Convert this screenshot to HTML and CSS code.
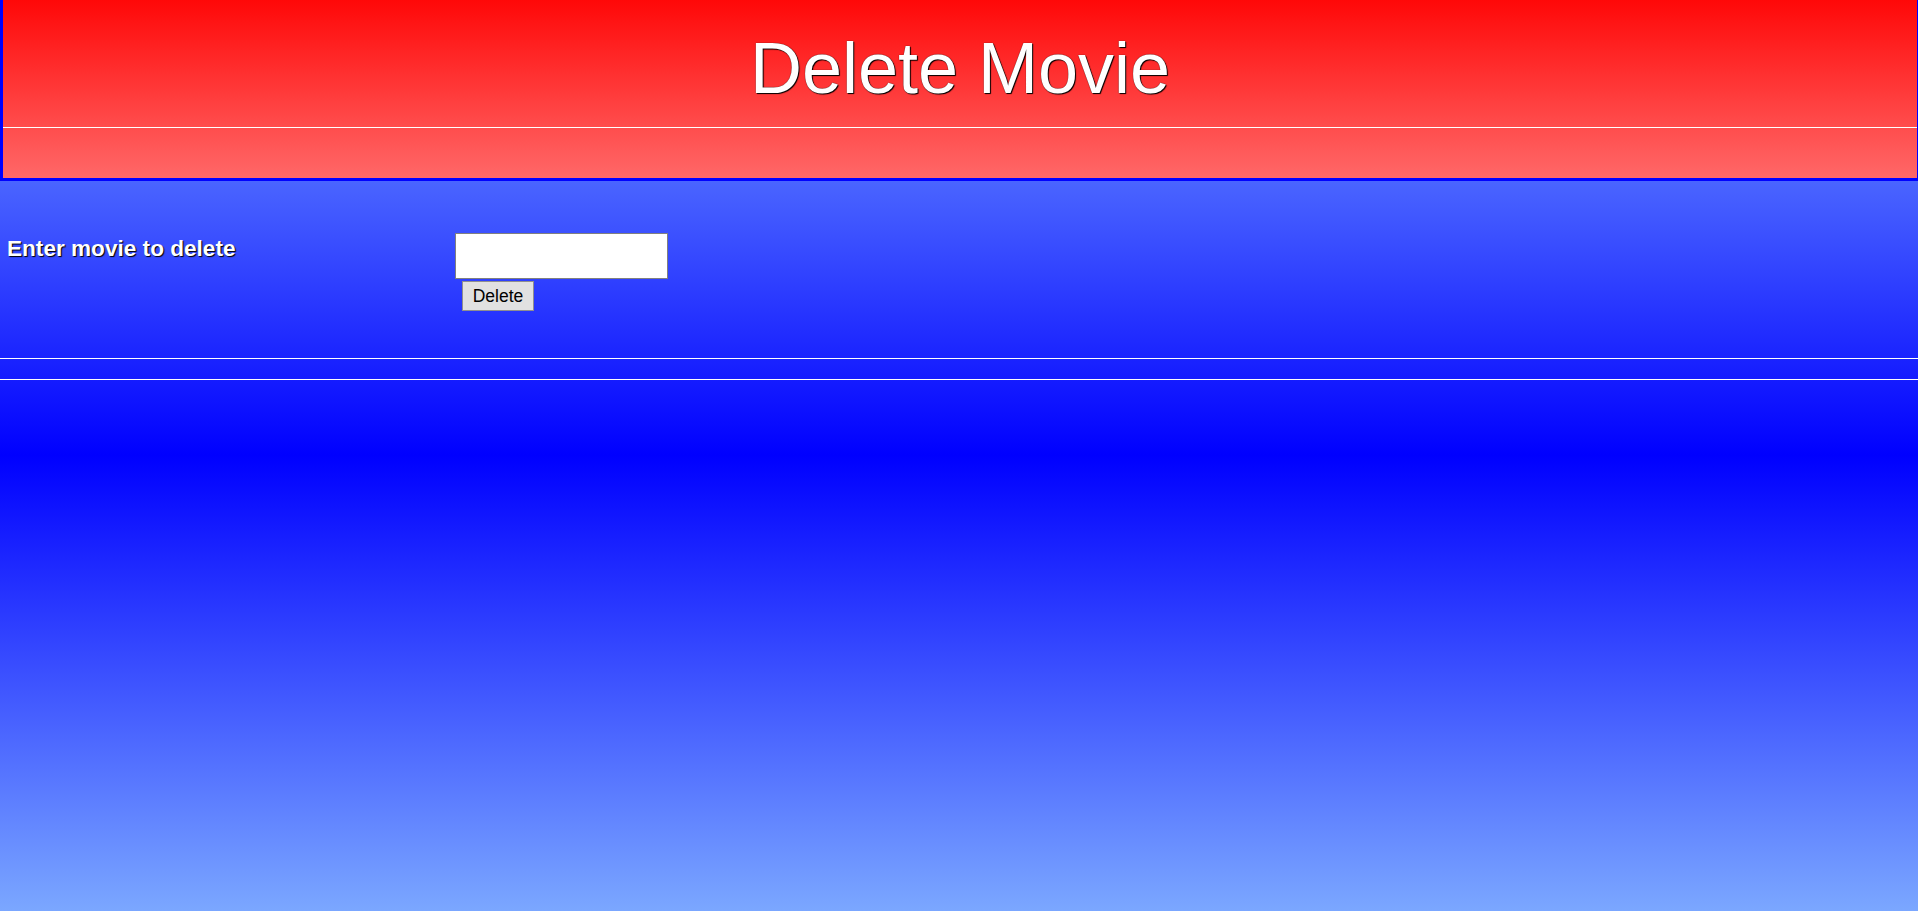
FILE: index.html
```html
<!DOCTYPE html>
<html>
<head>
<meta charset="utf-8">
<title>Delete Movie</title>
<link rel="stylesheet" href="styles.css">
</head>
<body>
<header class="banner">
  <h1 class="banner-title">Delete Movie</h1>
  <hr class="banner-rule">
</header>
<main class="content">
  <form class="delete-form">
    <label class="field-label" for="movie">Enter movie to delete</label>
    <div class="field-controls">
      <input class="movie-input" id="movie" type="text">
      <button class="delete-button" type="button">Delete</button>
    </div>
  </form>
  <hr class="page-rule first">
  <hr class="page-rule second">
</main>
</body>
</html>
```
FILE: styles.css
```css
html, body {
  margin: 0;
  padding: 0;
}
body {
  min-height: 911px;
  font-family: "Liberation Sans", Arial, sans-serif;
  background: linear-gradient(#7ba7ff 0px, #0000ff 455px, #7ba7ff 911px);
  background-repeat: no-repeat;
  background-size: 100% 911px;
  overflow: hidden;
}
.banner {
  box-sizing: border-box;
  width: 1918px;
  height: 181px;
  border-style: solid;
  border-color: #0000ff;
  border-width: 0 1px 3px 3px;
  background: linear-gradient(#ff0808, #ff6868);
  padding-top: 27px;
}
.banner-title {
  margin: 0;
  font-family: "Liberation Sans", Arial, sans-serif;
  font-weight: normal;
  font-size: 72px;
  line-height: 83px;
  text-align: center;
  color: #ffffff;
  text-shadow: 0 0 1px #000, 1px 1px 1px #000;
}
.banner-rule {
  margin: 17px 0 0 0;
  border: 0;
  height: 1px;
  background: #ffffff;
}
.content {
  padding: 0;
}
.delete-form {
  display: grid;
  grid-template-columns: 455px auto;
  padding-top: 52px;
  height: 125px;
  box-sizing: border-box;
}
.field-label {
  padding-left: 7px;
  padding-top: 3px;
  font-weight: bold;
  font-size: 22.6px;
  line-height: 25px;
  color: #ffffff;
  text-shadow: 1px 1px 1px #000;
}
.field-controls {
  display: flex;
  flex-direction: column;
  align-items: flex-start;
  gap: 2px;
}
.movie-input {
  box-sizing: border-box;
  width: 213px;
  height: 46px;
  margin: 0;
  border: 1px solid #808080;
  background: #ffffff;
}
.delete-button {
  box-sizing: border-box;
  margin: 0 0 0 7px;
  width: 72px;
  height: 30px;
  padding: 0;
  font-family: "Liberation Sans", Arial, sans-serif;
  font-size: 17.5px;
  color: #000;
  background: #e1e1e1;
  border: 1px solid #8f8f8f;
}
.page-rule {
  margin: 0;
  border: 0;
  height: 1px;
  background: #ffffff;
}
.page-rule.first {
  margin-top: 52px;
}
.page-rule.second {
  margin-top: 20px;
}
```
